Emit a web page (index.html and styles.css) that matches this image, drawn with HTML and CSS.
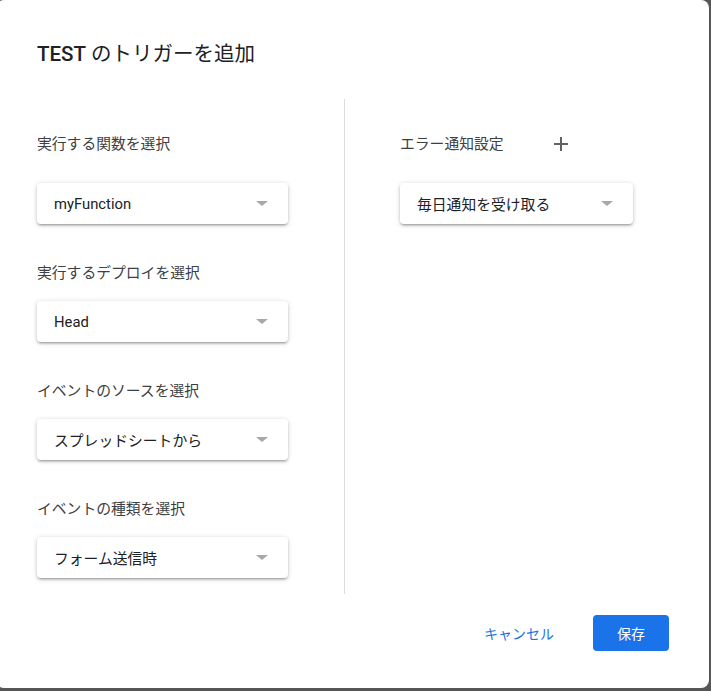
FILE: index.html
```html
<!DOCTYPE html>
<html lang="ja">
<head>
<meta charset="utf-8">
<title>TEST のトリガーを追加</title>
<link rel="stylesheet" href="styles.css">
</head>
<body>
<div class="dialog">
  <h1 class="title"><span class="project">TEST</span> のトリガーを追加</h1>
  <div class="columns">
    <div class="col col-left">
      <div class="head"><span class="label">実行する関数を選択</span></div>
      <div class="select"><span class="value">myFunction</span><span class="arrow"></span></div>
      <div class="label row-label">実行するデプロイを選択</div>
      <div class="select"><span class="value">Head</span><span class="arrow"></span></div>
      <div class="label row-label">イベントのソースを選択</div>
      <div class="select"><span class="value">スプレッドシートから</span><span class="arrow"></span></div>
      <div class="label row-label">イベントの種類を選択</div>
      <div class="select"><span class="value">フォーム送信時</span><span class="arrow"></span></div>
    </div>
    <div class="col col-right">
      <div class="head">
        <span class="label">エラー通知設定</span>
        <button class="icon-btn" aria-label="追加">
          <svg width="24" height="24" viewBox="0 0 24 24"><path d="M19 13h-6v6h-2v-6H5v-2h6V5h2v6h6v2z" fill="#5f6368"/></svg>
        </button>
      </div>
      <div class="select select-narrow"><span class="value">毎日通知を受け取る</span><span class="arrow"></span></div>
    </div>
  </div>
  <div class="footer">
    <button class="btn-text">キャンセル</button>
    <button class="btn-primary">保存</button>
  </div>
</div>
</body>
</html>
```
FILE: styles.css
```css
html, body {
  margin: 0;
  padding: 0;
  height: 100%;
  overflow: hidden;
}
body {
  background: #565656;
  font-family: "Roboto", "Noto Sans CJK JP", sans-serif;
}
.dialog {
  box-sizing: border-box;
  width: 713px;
  height: 688px;
  margin-left: -4px;
  background: #ffffff;
  border-radius: 8px;
  padding: 40px 40px 0 41px;
}
.title {
  margin: 0;
  font-size: 20.5px;
  line-height: 28px;
  font-weight: 400;
  color: #202124;
}
.project {
  font-weight: 500;
}
.columns {
  display: flex;
  margin-top: 31px;
}
.col {
  display: flex;
  flex-direction: column;
  align-items: flex-start;
}
.col-left {
  width: 307px;
  padding: 25px 0 16px 0;
}
.col-right {
  border-left: 1px solid #dadce0;
  padding: 25px 0 0 55px;
}
.head {
  height: 40px;
  display: flex;
  align-items: center;
  margin-bottom: 19px;
}
.label {
  font-size: 14.8px;
  line-height: 20px;
  color: #3c4043;
}
.row-label {
  margin-top: 39px;
  margin-bottom: 18px;
}
.icon-btn {
  width: 40px;
  height: 40px;
  margin-left: 37px;
  padding: 0;
  border: none;
  background: transparent;
  display: flex;
  align-items: center;
  justify-content: center;
}
.select {
  box-sizing: border-box;
  width: 251px;
  height: 41px;
  padding: 0 20px 0 17px;
  background: #ffffff;
  border-radius: 4px;
  box-shadow: 0 2px 2px 0 rgba(0,0,0,0.14), 0 3px 1px -2px rgba(0,0,0,0.12), 0 1px 5px 0 rgba(0,0,0,0.2);
  display: flex;
  align-items: center;
  justify-content: space-between;
}
.select-narrow {
  width: 233px;
}
.value {
  font-size: 14.8px;
  color: #202124;
}
.arrow {
  width: 0;
  height: 0;
  border-left: 6px solid transparent;
  border-right: 6px solid transparent;
  border-top: 5px solid #a8a8a8;
}
.footer {
  display: flex;
  justify-content: flex-end;
  align-items: center;
  margin-top: 21px;
}
.btn-text {
  height: 36px;
  padding: 0 16px;
  margin-right: 23px;
  border: none;
  background: transparent;
  color: #1a73e8;
  font-family: "Roboto", "Noto Sans CJK JP", sans-serif;
  font-size: 14px;
}
.btn-primary {
  width: 76px;
  height: 36px;
  border: none;
  border-radius: 4px;
  background: #1a73e8;
  color: #ffffff;
  font-family: "Roboto", "Noto Sans CJK JP", sans-serif;
  font-size: 14px;
}
```
